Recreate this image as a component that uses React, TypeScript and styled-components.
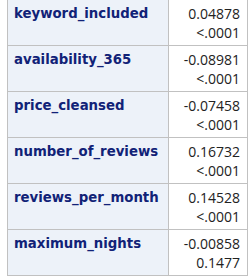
import styled, { createGlobalStyle } from "styled-components";

interface Row {
  name: string;
  coef: string;
  p: string;
}

const rows: Row[] = [
  { name: "keyword_included", coef: "0.04878", p: "<.0001" },
  { name: "availability_365", coef: "-0.08981", p: "<.0001" },
  { name: "price_cleansed", coef: "-0.07458", p: "<.0001" },
  { name: "number_of_reviews", coef: "0.16732", p: "<.0001" },
  { name: "reviews_per_month", coef: "0.14528", p: "<.0001" },
  { name: "maximum_nights", coef: "-0.00858", p: "0.1477" },
];

const App = () => {
  return (
    <>
      <GlobalStyle />
      <Page>
        <Table>
          <tbody>
            {rows.map((r) => (
              <tr key={r.name}>
                <Label>{r.name}</Label>
                <Value>
                  <div>{r.coef}</div>
                  <div>{r.p}</div>
                </Value>
              </tr>
            ))}
          </tbody>
        </Table>
      </Page>
    </>
  );
};

const GlobalStyle = createGlobalStyle`
  html, body {
    margin: 0;
    padding: 0;
    background: #fff;
  }
`;

const Page = styled.div`
  width: 251px;
  height: 277px;
  overflow: hidden;
  padding-left: 7px;
  box-sizing: border-box;
`;

const Table = styled.table`
  border-collapse: collapse;
  margin-top: -1px;
  width: 241px;

  td {
    border: 1px solid #c1c1c1;
    vertical-align: top;
    height: 46px;
    box-sizing: border-box;
  }
`;

const Label = styled.td`
  width: 161px;
  background: #edf2f9;
  color: #112277;
  font-family: "DejaVu Sans", sans-serif;
  font-weight: bold;
  font-size: 13.3px;
  line-height: 19px;
  padding: 4px 0 0 6px;
  white-space: nowrap;
`;

const Value = styled.td`
  background: #fff;
  color: #222;
  font-family: "Open Sans", sans-serif;
  font-size: 14px;
  line-height: 19px;
  text-align: right;
  padding: 4px 7px 0 0;
`;

export default App;
